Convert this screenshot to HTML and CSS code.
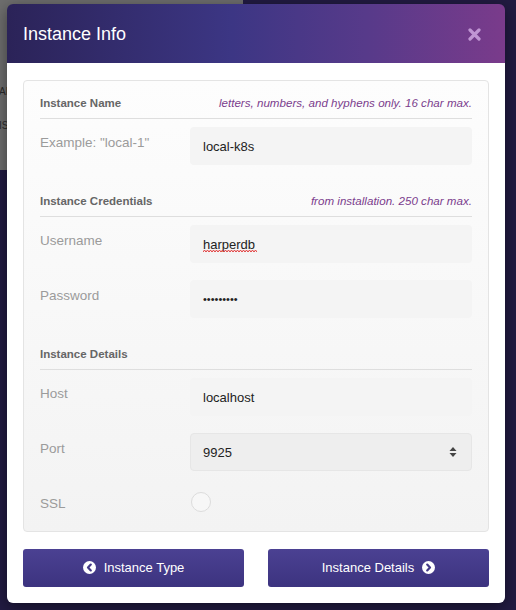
FILE: index.html
```html
<!DOCTYPE html>
<html lang="en">
<head>
  <meta charset="UTF-8" />
  <meta name="viewport" content="width=device-width, initial-scale=1.0"/>
  <title>Instance Info</title>
  <link rel="stylesheet" href="styles.css">
</head>
<body>

  <div class="backdrop-page">
    <div class="backdrop-line first">AN</div>
    <div class="backdrop-line">IS</div>
  </div>

  <div class="modal">
    <div class="modal-header">
      <div class="modal-title">Instance Info</div>
      <svg class="close-icon" width="13" height="13" viewBox="0 0 13 13">
        <path d="M2 2 L11 11 M11 2 L2 11" stroke="#c9a0dc" stroke-width="3.2" stroke-linecap="round"/>
      </svg>
    </div>

    <div class="modal-body">
      <div class="form-card">

        <div class="section-head">
          <span>Instance Name</span>
          <em>letters, numbers, and hyphens only. 16 char max.</em>
        </div>
        <div class="field-row">
          <label>Example: "local-1"</label>
          <input type="text" value="local-k8s" />
        </div>

        <div class="section-head">
          <span>Instance Credentials</span>
          <em>from installation. 250 char max.</em>
        </div>
        <div class="field-row">
          <label>Username</label>
          <div class="input-wrap">
            <input type="text" value="harperdb" />
            <!-- spellcheck squiggle -->
            <svg class="squiggle" width="54" height="4" viewBox="0 0 54 4">
              <path d="M0 3 L1.5 1 L3 3 L4.5 1 L6 3 L7.5 1 L9 3 L10.5 1 L12 3 L13.5 1 L15 3 L16.5 1 L18 3 L19.5 1 L21 3 L22.5 1 L24 3 L25.5 1 L27 3 L28.5 1 L30 3 L31.5 1 L33 3 L34.5 1 L36 3 L37.5 1 L39 3 L40.5 1 L42 3 L43.5 1 L45 3 L46.5 1 L48 3 L49.5 1 L51 3 L52.5 1 L54 3" stroke="#e23a3a" stroke-width="1" fill="none"/>
            </svg>
          </div>
        </div>
        <div class="field-row">
          <label>Password</label>
          <input type="password" value="harperdb1" />
        </div>

        <div class="section-head">
          <span>Instance Details</span>
        </div>
        <div class="field-row">
          <label>Host</label>
          <input type="text" value="localhost" />
        </div>
        <div class="field-row">
          <label>Port</label>
          <div class="input-wrap">
            <select>
              <option>9925</option>
            </select>
            <svg class="select-arrows" width="8" height="12" viewBox="0 0 8 12">
              <path d="M4 1 L7.5 5 H0.5 Z M4 11 L7.5 7 H0.5 Z" fill="#444"/>
            </svg>
          </div>
        </div>
        <div class="field-row ssl-row">
          <label>SSL</label>
          <div class="radio"></div>
        </div>

      </div>

      <div class="button-row">
        <button class="nav-btn">
          <svg width="13" height="13" viewBox="0 0 13 13">
            <circle cx="6.5" cy="6.5" r="6.5" fill="#fff"/>
            <path d="M7.8 3.6 L5 6.5 L7.8 9.4" stroke="#443a88" stroke-width="2.2" fill="none" stroke-linecap="round" stroke-linejoin="round"/>
          </svg>
          Instance Type
        </button>
        <button class="nav-btn">
          Instance Details
          <svg width="13" height="13" viewBox="0 0 13 13">
            <circle cx="6.5" cy="6.5" r="6.5" fill="#fff"/>
            <path d="M5.2 3.6 L8 6.5 L5.2 9.4" stroke="#443a88" stroke-width="2.2" fill="none" stroke-linecap="round" stroke-linejoin="round"/>
          </svg>
        </button>
      </div>
    </div>
  </div>

</body>
</html>
```

FILE: styles.css
```css
* {
  margin: 0;
  padding: 0;
  box-sizing: border-box;
  font-family: 'Liberation Sans', Arial, sans-serif;
}

body {
  background-color: #221b42;
  width: 516px;
  height: 610px;
  overflow: hidden;
  position: relative;
}

.backdrop-page {
  width: 243px;
  height: 170px;
  background-color: #6e6e6e;
  padding-top: 86px;
}

.backdrop-line {
  font-size: 10px;
  color: #2a2a2a;
  margin-left: -1px;
  height: 34px;
}

.modal {
  position: absolute;
  left: 7px;
  top: 4px;
  width: 498px;
  border-radius: 6px;
  box-shadow: 0 4px 16px rgba(0, 0, 0, 0.45);
}

.modal-header {
  height: 59px;
  padding: 0 24px 0 16px;
  display: flex;
  justify-content: space-between;
  align-items: center;
  border-radius: 6px 6px 0 0;
  background: linear-gradient(90deg, #2b2358 0%, #3c3684 45%, #573a8a 72%, #7a3b8b 100%);
}

.modal-title {
  color: white;
  font-size: 18px;
  padding-top: 1px;
}

.close-icon {
  margin-top: 2px;
  opacity: 0.9;
}

.modal-body {
  background-color: white;
  padding: 17px 16px 16px;
  border-radius: 0 0 6px 6px;
}

.form-card {
  border: 1px solid #e4e4e4;
  border-radius: 4px;
  background: linear-gradient(#fdfdfd, #f3f3f3);
  padding: 0 16px 19px;
}

.section-head {
  display: flex;
  justify-content: space-between;
  align-items: center;
  margin-top: 29px;
  padding-bottom: 8px;
  border-bottom: 1px solid #dedede;
  line-height: 14px;
}

.section-head:first-child {
  margin-top: 15px;
}

.section-head span {
  font-size: 11.5px;
  font-weight: bold;
  color: #666666;
}

.section-head em {
  font-size: 11.6px;
  color: #7b3d8d;
}

.field-row {
  display: grid;
  grid-template-columns: 150px 1fr;
  margin-top: 17px;
}

.section-head + .field-row {
  margin-top: 8px;
}

.field-row label {
  font-size: 13.5px;
  color: #9b9b9b;
  padding-top: 8px;
}

.field-row input,
.field-row select {
  width: 100%;
  height: 38px;
  border: none;
  outline: none;
  border-radius: 4px;
  background-color: #f4f4f4;
  font-size: 13px;
  color: #222222;
  padding: 0 13px;
}

.field-row input[type="password"] {
  font-size: 11px;
}

.input-wrap {
  position: relative;
}

.squiggle {
  position: absolute;
  left: 13px;
  top: 24px;
}

.field-row select {
  appearance: none;
  -webkit-appearance: none;
  background-color: #eeeeee;
  border: 1px solid #e6e6e6;
  padding-left: 12px;
}

.select-arrows {
  position: absolute;
  right: 15px;
  top: 13px;
}

.ssl-row {
  margin-top: 21px;
}

.ssl-row label {
  padding-top: 4px;
}

.radio {
  width: 20px;
  height: 20px;
  border-radius: 50%;
  border: 1px solid #dcdcdc;
  background-color: #f7f7f7;
  margin-left: 1px;
}

.button-row {
  display: flex;
  gap: 24px;
  margin-top: 17px;
}

.nav-btn {
  flex: 1;
  height: 38px;
  border: none;
  border-radius: 3px;
  background: linear-gradient(#4b4192, #3c337f);
  color: white;
  font-size: 13px;
  display: flex;
  justify-content: center;
  align-items: center;
  gap: 8px;
  padding-bottom: 1px;
}
```
